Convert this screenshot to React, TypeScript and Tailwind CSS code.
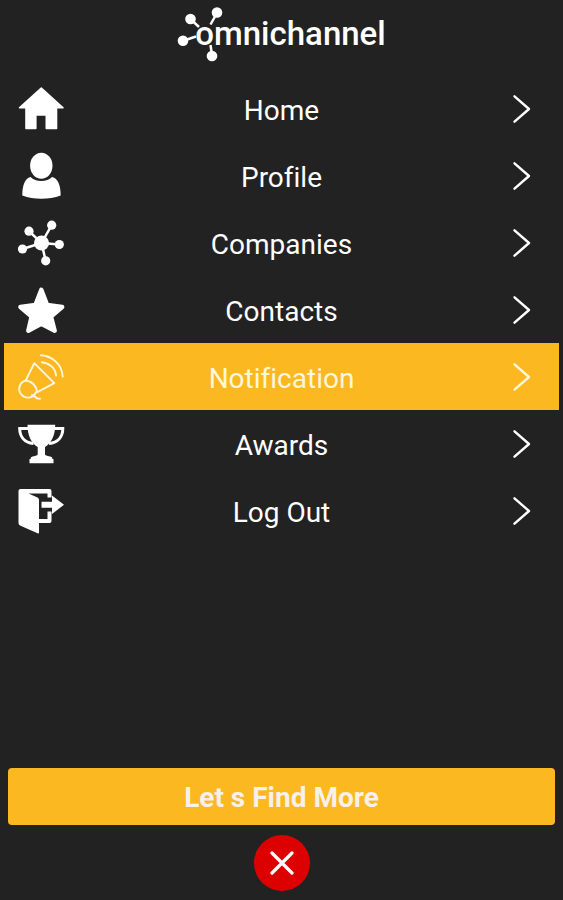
import type { ReactNode } from "react";

const Icon = ({ children }: { children: ReactNode }) => (
  <svg viewBox="0 0 46 46" className="h-[46px] w-[46px] shrink-0 overflow-visible" fill="currentColor" aria-hidden="true">
    {children}
  </svg>
);

const HomeIcon = () => (
  <Icon>
    <path
      d="M23.3 2 45 21.8H38.5V42.5H28.3V29H17.8V42.5H8V21.8H1.5Z"
      stroke="currentColor"
      strokeWidth="1.6"
      strokeLinejoin="round"
    />
  </Icon>
);

const ProfileIcon = () => (
  <Icon>
    <ellipse cx="23.3" cy="12.8" rx="11.2" ry="13" />
    <path d="M12.5 24C15 26.800 19 28 23.300 28S31.500 26.800 34 24C40 25.500 42.700 32 42.700 42.500C37 45 30 45.700 23.300 45.700S10 45 4.300 42.500C4.300 32 7 25.500 12.500 24Z" />
  </Icon>
);

const CompaniesIcon = () => (
  <Icon>
    <path
      d="M23.5 23 33.7 5.2M23.5 23 11 11.2M23.5 23 4.5 29M23.5 23 41.3 24.5M23.5 23 27.7 40.8"
      stroke="currentColor"
      strokeWidth="2.5"
    />
    <circle cx="23.5" cy="23" r="7.5" />
    <circle cx="33.7" cy="5.2" r="4.6" />
    <circle cx="11" cy="11.2" r="4.6" />
    <circle cx="4.5" cy="29" r="4.6" />
    <circle cx="41.3" cy="24.5" r="4.6" />
    <circle cx="27.7" cy="40.8" r="4.6" />
  </Icon>
);

const ContactsIcon = () => (
  <Icon>
    <path
      d="M23.3 2.8 29.2 18 44.2 20 33 29.500 36.700 43.700 23.300 36.800 10.300 43.700 13.600 29.500 2.400 20 17.400 18Z"
      stroke="currentColor"
      strokeWidth="4.4"
      strokeLinejoin="round"
    />
  </Icon>
);

const NotificationIcon = () => (
  <Icon>
    <g fill="none" stroke="currentColor" strokeWidth="1.9" strokeLinecap="round" strokeLinejoin="round">
      <path d="M16.3 9.2 36.3 29.2 19.3 38.2C18.5 32 14 27.2 7.7 26.5Z" />
      <path d="M7.7 26.5A8.7 8.7 0 1 0 18 38.2" />
      <path d="M14 41C16.5 41 17 45 22 44.8" />
      <path d="M23 1.2C35 2 44 11 44.7 22.5" />
      <path d="M23.7 8.2C31.5 9 37.5 14 38 21.5" />
    </g>
  </Icon>
);

const AwardsIcon = () => (
  <Icon>
    <path d="M9.5 3.8H37.2C37.2 15 33 22.5 27 26V33.5C28 35.5 34.3 35 34.3 37V38H35.5V42.3H11.5V38H12.7V37C12.7 35 18.7 35.5 19.7 33.5V26C13.5 22.5 9.5 15 9.5 3.8Z" />
    <path
      d="M10 7.5H1.7C1.7 15 6 21.5 15.5 22.500M36.700 7.500H44.800C44.800 15 40.500 21.500 31 22.500"
      fill="none"
      stroke="currentColor"
      strokeWidth="3"
    />
  </Icon>
);

const LogOutIcon = () => (
  <Icon>
    <path d="M.5 3Q.5 1 2.500 1H31.500Q33.500 1 33.500 3V9.500H29.500V5.500H10.500L19.500 9.500Q21 10.300 21 12V31H29.500V23.500H33.500V33Q33.500 35 31.500 35H21V44.500Q21 46 19.500 45.300L2 37.500Q.5 36.800 .5 35Z" />
    <path d="M23.5 13.800H34V7.500L46 16.800 34 26V19.800H23.500Z" />
  </Icon>
);

const Chevron = () => (
  <svg viewBox="0 0 46 46" className="h-[46px] w-[46px] shrink-0" fill="none" aria-hidden="true">
    <path d="M15.5 10.3 30 23 15.5 35.7" stroke="currentColor" strokeWidth="2.4" strokeLinecap="round" strokeLinejoin="round" />
  </svg>
);

const Logo = () => (
  <div className="flex items-center">
    <svg viewBox="0 0 46 56" className="h-[56px] w-[46px] shrink-0" fill="currentColor" aria-hidden="true">
      <path d="M40 7 33.5 18.5M14 13.5 22 21M7 34.5 19 30.5M35 49 33.5 39" stroke="currentColor" strokeWidth="2.5" />
      <circle cx="40" cy="6.5" r="5.3" />
      <circle cx="13.5" cy="13" r="5.3" />
      <circle cx="6" cy="34.7" r="5.3" />
      <circle cx="35" cy="50" r="5.3" />
    </svg>
    <span className="-ml-7 text-[33px] leading-10 font-medium">omnichannel</span>
  </div>
);

const items = [
  { label: "Home", icon: HomeIcon },
  { label: "Profile", icon: ProfileIcon },
  { label: "Companies", icon: CompaniesIcon },
  { label: "Contacts", icon: ContactsIcon },
  { label: "Notification", icon: NotificationIcon, active: true },
  { label: "Awards", icon: AwardsIcon },
  { label: "Log Out", icon: LogOutIcon },
];

const App = () => {
  return (
    <div className="flex min-h-screen flex-col bg-[#222222] font-['Roboto',sans-serif] text-white">
      <header className="flex justify-center pt-1.5 pb-[13px]">
        <Logo />
      </header>

      <nav className="flex-1 px-1">
        <ul>
          {items.map(({ label, icon: ItemIcon, active }) => (
            <li key={label}>
              <a
                href="#"
                aria-current={active ? "page" : undefined}
                className={
                  active
                    ? "flex h-[67px] items-center bg-[#fcb820] px-3.5 text-[#fff6dc]"
                    : "flex h-[67px] items-center px-3.5"
                }
              >
                <ItemIcon />
                <span className="flex-1 pt-1 text-center text-[28px] leading-8 [font-variant-ligatures:none]">{label}</span>
                <Chevron />
              </a>
            </li>
          ))}
        </ul>
      </nav>

      <footer className="flex flex-col items-center gap-2.5 px-2 pb-[9px]">
        <button type="button" className="h-[57px] w-full rounded bg-[#fcb820] pt-0.5 text-[28px] leading-8 font-bold text-[#f8f0ea]">
          Let s Find More
        </button>
        <button type="button" aria-label="Close" className="flex h-14 w-14 items-center justify-center rounded-full bg-[#dd0000]">
          <svg viewBox="0 0 24 24" className="h-6 w-6" fill="none" aria-hidden="true">
            <path d="M2 2 22 22M22 2 2 22" stroke="currentColor" strokeWidth="3.2" strokeLinecap="round" />
          </svg>
        </button>
      </footer>
    </div>
  );
};

export default App;
